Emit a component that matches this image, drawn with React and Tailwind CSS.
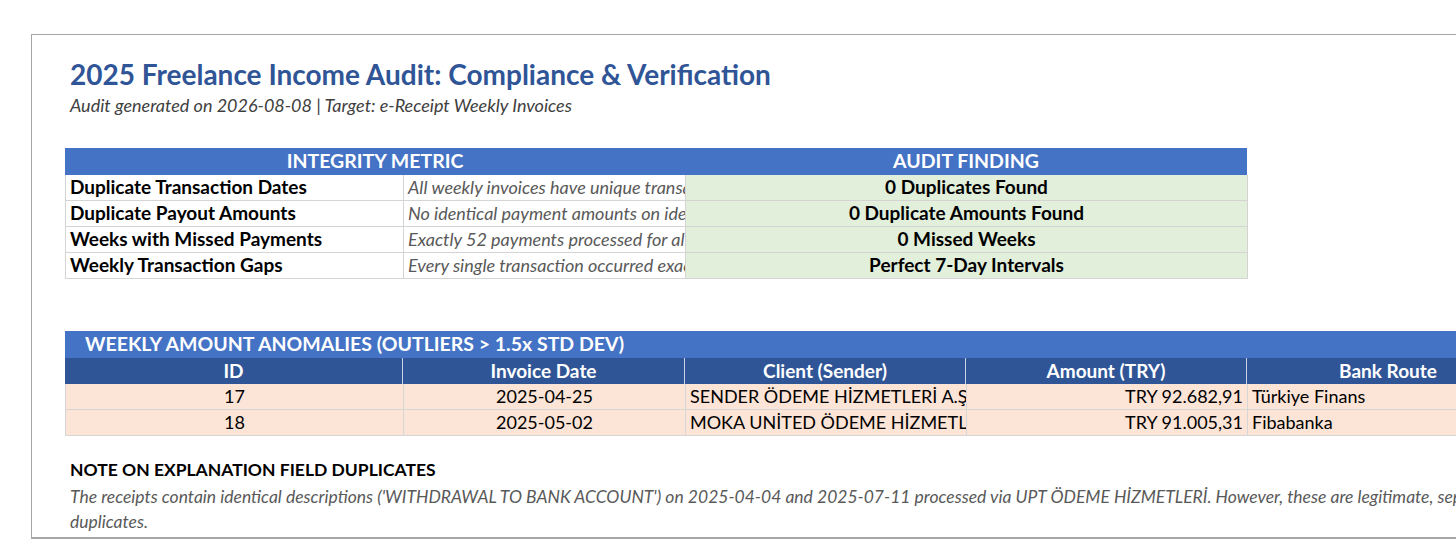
import React from "react";

const font = "font-['Lato','Open_Sans',sans-serif]";

const integrityRows = [
    {
        metric: "Duplicate Transaction Dates",
        detail: "All weekly invoices have unique transaction dates.",
        finding: "0 Duplicates Found",
    },
    {
        metric: "Duplicate Payout Amounts",
        detail: "No identical payment amounts on identical dates.",
        finding: "0 Duplicate Amounts Found",
    },
    {
        metric: "Weeks with Missed Payments",
        detail: "Exactly 52 payments processed for all 52 weeks.",
        finding: "0 Missed Weeks",
    },
    {
        metric: "Weekly Transaction Gaps",
        detail: "Every single transaction occurred exactly 7 days apart.",
        finding: "Perfect 7-Day Intervals",
    },
];

const anomalies = [
    { id: 17, date: "2025-04-25", client: "SENDER ÖDEME HİZMETLERİ A.Ş", amount: "TRY 92.682,91", bank: "Türkiye Finans" },
    { id: 18, date: "2025-05-02", client: "MOKA UNİTED ÖDEME HİZMETLERİ A.Ş.", amount: "TRY 91.005,31", bank: "Fibabanka" },
];

const cols = "grid grid-cols-[338px_282px_281px_281px_282px]";

const IntegrityTable = () => (
    <div className="w-[1182px]">
        {/* header: metric spans A+B, finding spans C+D */}
        <div className="grid grid-cols-[620px_562px] h-[27px] bg-[#4472c4] text-white font-bold text-[19.5px] leading-[26px] text-center">
            <div>INTEGRITY METRIC</div>
            <div>AUDIT FINDING</div>
        </div>
        {integrityRows.map(row => (
            <div key={row.metric} className="grid grid-cols-[338px_282px_562px] h-[26px] leading-[24px] border-l border-[#d4d4d4]">
                <div className="border-r border-b border-[#d4d4d4] pl-[4px] font-bold text-[19px] text-black whitespace-nowrap overflow-hidden">
                    {row.metric}
                </div>
                <div className="border-r border-b border-[#d4d4d4] pl-[4px] italic text-[18px] text-[#595959] whitespace-nowrap overflow-hidden">
                    {row.detail}
                </div>
                <div className="border-r border-b border-[#d4d4d4] bg-[#e2efda] text-center font-bold text-[19px] text-black">
                    {row.finding}
                </div>
            </div>
        ))}
    </div>
);

const AnomalyTable = () => (
    <div className="w-[1464px]">
        <div className="h-[27px] bg-[#4472c4] pl-[20px] text-white font-bold text-[19.5px] leading-[26px] whitespace-nowrap">
            WEEKLY AMOUNT ANOMALIES (OUTLIERS &gt; 1.5x STD DEV)
        </div>
        <div className={`${cols} h-[26px] bg-[#2f5597] text-white font-bold text-[19px] leading-[25px] text-center`}>
            {["ID", "Invoice Date", "Client (Sender)", "Amount (TRY)", "Bank Route"].map((h, i) => (
                <div key={h} className={i < 4 ? "border-r border-[#c9d3e6]" : ""}>{h}</div>
            ))}
        </div>
        {anomalies.map(a => (
            <div key={a.id} className={`${cols} h-[26px] bg-[#fce4d6] text-[18px] leading-[24px] text-black border-l border-[#d6d6d6]`}>
                <div className="border-r border-b border-[#d6d6d6] text-center">{a.id}</div>
                <div className="border-r border-b border-[#d6d6d6] text-center">{a.date}</div>
                <div className="border-r border-b border-[#d6d6d6] pl-[4px] whitespace-nowrap overflow-hidden">{a.client}</div>
                <div className="border-r border-b border-[#d6d6d6] pr-[4px] text-right">{a.amount}</div>
                <div className="border-r border-b border-[#d6d6d6] pl-[4px]">{a.bank}</div>
            </div>
        ))}
    </div>
);

const App = () => {
    return (
        <div className={`w-[1456px] h-[551px] overflow-hidden bg-white ${font}`}>
            <div className="pt-[34px] pl-[31px]">
                <div className="w-[1800px] border-l border-t border-b-2 border-[#a6a6a6] pl-[33px] pt-[22px] pb-[3px]">
                    <h1 className="pl-[5px] text-[28px] leading-[34px] font-bold text-[#2f5597] whitespace-nowrap">
                        2025 Freelance Income Audit: Compliance &amp; Verification
                    </h1>
                    <p className="pl-[5px] mt-[3px] text-[18px] leading-[22px] italic text-[#404040]">
                        Audit generated on 2026-08-08 | Target: e-Receipt Weekly Invoices
                    </p>

                    <div className="mt-[32px]">
                        <IntegrityTable />
                    </div>

                    <div className="mt-[52px]">
                        <AnomalyTable />
                    </div>

                    <h2 className="pl-[5px] mt-[23px] text-[17.5px] leading-[22px] font-bold text-black">
                        NOTE ON EXPLANATION FIELD DUPLICATES
                    </h2>
                    <p className="pl-[5px] mt-[3px] text-[17.5px] leading-[25px] italic text-[#595959]">
                        <span className="whitespace-nowrap">
                            The receipts contain identical descriptions ('WITHDRAWAL TO BANK ACCOUNT') on 2025-04-04 and 2025-07-11 processed via UPT ÖDEME HİZMETLERİ. However, these are legitimate, separate weekly payouts and not true
                        </span>
                        <br />
                        duplicates.
                    </p>
                </div>
            </div>
        </div>
    );
};

export default App;
